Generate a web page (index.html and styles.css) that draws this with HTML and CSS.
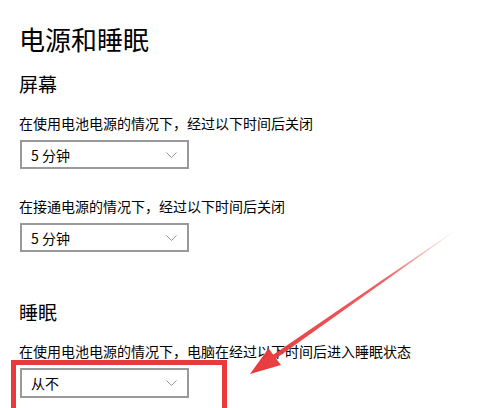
FILE: index.html
```html
<!DOCTYPE html>
<html lang="zh-CN">
<head>
    <meta charset="UTF-8">
    <meta name="viewport" content="width=device-width, initial-scale=1.0">
    <title>电源和睡眠</title>
    <link rel="stylesheet" href="styles.css">
</head>
<body>

    <div class="page">
        <h1 class="title">电源和睡眠</h1>

        <!-- 屏幕 -->
        <h2 class="section">屏幕</h2>
        <p class="label">在使用电池电源的情况下，经过以下时间后关闭</p>
        <div class="select">
            <span>5 分钟</span>
            <svg class="chevron" width="11" height="6" viewBox="0 0 11 6"><path d="M0.5 0.5 L5.5 5.5 L10.5 0.5" fill="none" stroke="#888" stroke-width="0.9"/></svg>
        </div>

        <p class="label label-gap">在接通电源的情况下，经过以下时间后关闭</p>
        <div class="select">
            <span>5 分钟</span>
            <svg class="chevron" width="11" height="6" viewBox="0 0 11 6"><path d="M0.5 0.5 L5.5 5.5 L10.5 0.5" fill="none" stroke="#888" stroke-width="0.9"/></svg>
        </div>

        <!-- 睡眠 -->
        <h2 class="section section-gap">睡眠</h2>
        <p class="label label-tight">在使用电池电源的情况下，电脑在经过以下时间后进入睡眠状态</p>
        <div class="highlight">
            <div class="select">
                <span>从不</span>
                <svg class="chevron" width="11" height="6" viewBox="0 0 11 6"><path d="M0.5 0.5 L5.5 5.5 L10.5 0.5" fill="none" stroke="#888" stroke-width="0.9"/></svg>
            </div>
        </div>
    </div>

    <!-- annotation arrow -->
    <svg class="arrow" width="500" height="408" viewBox="0 0 500 408">
        <defs>
            <linearGradient id="fade" x1="456" y1="230" x2="250" y2="374" gradientUnits="userSpaceOnUse">
                <stop offset="0" stop-color="#e8393c" stop-opacity="0"/>
                <stop offset="0.35" stop-color="#e8393c" stop-opacity="0.8"/>
                <stop offset="1" stop-color="#e8393c"/>
            </linearGradient>
        </defs>
        <polygon points="250,374 281,365 276,358.6 456.2,230.3 455.8,229.7 273.2,354.8 268.6,348.2" fill="url(#fade)"/>
    </svg>

</body>
</html>
```

FILE: styles.css
```css
body {
    margin: 0;
    padding: 0;
    background: #fff;
    color: #000;
    font-family: "Noto Sans CJK SC", "Noto Sans", sans-serif;
    overflow: hidden;
    height: 408px;
}

.page {
    padding: 22px 0 0 19px;
}

.title {
    margin: 0;
    font-size: 26px;
    font-weight: normal;
    line-height: 34px;
}

.section {
    margin: 15px 0 0 0;
    font-size: 19px;
    font-weight: normal;
    line-height: 26px;
}

.section-gap {
    margin-top: 47px;
}

.label {
    margin: 16px 0 0 0;
    font-size: 14px;
    line-height: 20px;
}

.label-gap {
    margin-top: 27px;
}

.label-tight {
    line-height: 18px;
    margin-top: 17px;
}

.select {
    box-sizing: border-box;
    width: 169px;
    height: 29px;
    margin: 7px 0 0 1px;
    border: 2px solid #999;
    padding: 0 9px;
    display: flex;
    align-items: center;
    justify-content: space-between;
    font-size: 14px;
}

.chevron {
    margin-right: 1px;
}

/* red annotation box, runs off the bottom edge */
.highlight {
    box-sizing: border-box;
    width: 216px;
    height: 48px;
    margin-left: -8px;
    border: 5px solid #e8393c;
    border-bottom: none;
    padding: 3px 0 0 3px;
}

.highlight .select {
    height: 30px;
    margin-top: 0;
}

.arrow {
    position: absolute;
    left: 0;
    top: 0;
}
```
